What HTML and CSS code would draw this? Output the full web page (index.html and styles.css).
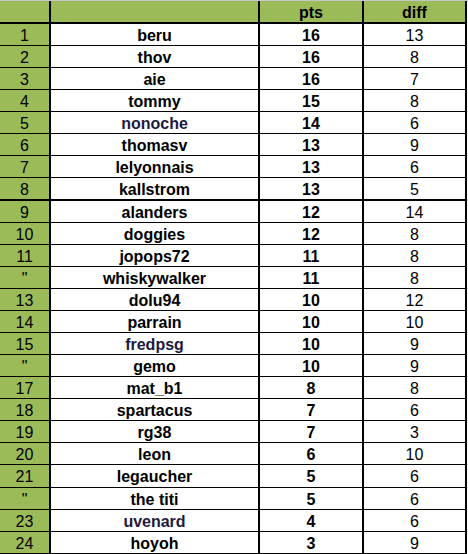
FILE: index.html
```html
<!DOCTYPE html>
<html>
<head>
<meta charset="utf-8">
<link rel="stylesheet" href="styles.css">
</head>
<body>
<div class="sheet">
  <div class="grid">
    <div class="c rank hd"></div><div class="c name hd"></div><div class="c pts hd">pts</div><div class="c diff hd">diff</div>

    <div class="c rank">1</div><div class="c name">beru</div><div class="c pts">16</div><div class="c diff">13</div>
    <div class="c rank">2</div><div class="c name">thov</div><div class="c pts">16</div><div class="c diff">8</div>
    <div class="c rank">3</div><div class="c name">aie</div><div class="c pts">16</div><div class="c diff">7</div>
    <div class="c rank">4</div><div class="c name">tommy</div><div class="c pts">15</div><div class="c diff">8</div>
    <div class="c rank">5</div><div class="c name navy">nonoche</div><div class="c pts">14</div><div class="c diff">6</div>
    <div class="c rank">6</div><div class="c name">thomasv</div><div class="c pts">13</div><div class="c diff">9</div>
    <div class="c rank">7</div><div class="c name">lelyonnais</div><div class="c pts">13</div><div class="c diff">6</div>
    <div class="c rank sep">8</div><div class="c name sep">kallstrom</div><div class="c pts sep">13</div><div class="c diff sep">5</div>
    <div class="c rank">9</div><div class="c name">alanders</div><div class="c pts">12</div><div class="c diff">14</div>
    <div class="c rank">10</div><div class="c name">doggies</div><div class="c pts">12</div><div class="c diff">8</div>
    <div class="c rank">11</div><div class="c name">jopops72</div><div class="c pts">11</div><div class="c diff">8</div>
    <div class="c rank">"</div><div class="c name">whiskywalker</div><div class="c pts">11</div><div class="c diff">8</div>
    <div class="c rank">13</div><div class="c name">dolu94</div><div class="c pts">10</div><div class="c diff">12</div>
    <div class="c rank">14</div><div class="c name">parrain</div><div class="c pts">10</div><div class="c diff">10</div>
    <div class="c rank">15</div><div class="c name navy">fredpsg</div><div class="c pts">10</div><div class="c diff">9</div>
    <div class="c rank">"</div><div class="c name">gemo</div><div class="c pts">10</div><div class="c diff">9</div>
    <div class="c rank">17</div><div class="c name">mat_b1</div><div class="c pts">8</div><div class="c diff">8</div>
    <div class="c rank">18</div><div class="c name">spartacus</div><div class="c pts">7</div><div class="c diff">6</div>
    <div class="c rank">19</div><div class="c name">rg38</div><div class="c pts">7</div><div class="c diff">3</div>
    <div class="c rank">20</div><div class="c name">leon</div><div class="c pts">6</div><div class="c diff">10</div>
    <div class="c rank tall">21</div><div class="c name tall">legaucher</div><div class="c pts tall">5</div><div class="c diff tall">6</div>
    <div class="c rank">"</div><div class="c name">the titi</div><div class="c pts">5</div><div class="c diff">6</div>
    <div class="c rank">23</div><div class="c name navy">uvenard</div><div class="c pts">4</div><div class="c diff">6</div>
    <div class="c rank">24</div><div class="c name">hoyoh</div><div class="c pts">3</div><div class="c diff">9</div>
  </div>
</div>
</body>
</html>
```

FILE: styles.css
```css
html, body {
  margin: 0;
  padding: 0;
  background: #ffffff;
}

.sheet {
  width: 468px;
  border-top: 1px solid #c6c6c6;
  font-family: "Liberation Sans", Arial, sans-serif;
  font-size: 16px;
  color: #000000;
}

.grid {
  display: grid;
  grid-template-columns: 51px 209px 104px 103px;
  grid-auto-rows: auto;
}

.c {
  box-sizing: border-box;
  height: 22px;
  border-bottom: 1px solid #000000;
  border-right: 2px solid #000000;
  display: flex;
  align-items: center;
  justify-content: center;
  line-height: 1;
  padding-top: 2px;
  white-space: nowrap;
}

.hd {
  height: 23px;
  border-bottom-width: 2px;
  background: #9bbb59;
  font-weight: bold;
}

.sep {
  height: 23px;
  border-bottom-width: 2px;
}

.tall {
  height: 23px;
}

.rank {
  background: #9bbb59;
}

.name, .pts {
  font-weight: bold;
}

.navy {
  color: #1d1a40;
}
```
